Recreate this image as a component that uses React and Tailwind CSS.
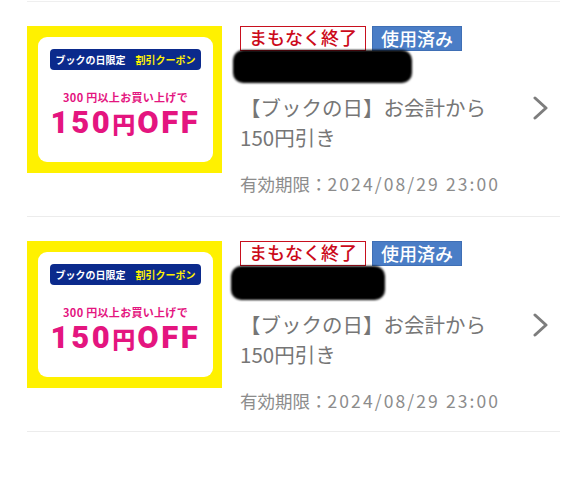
import React from "react";

const coupons = [
  { id: 1, blob: "ml-[-7px] w-[179px] h-[33px] mt-[-1px]" },
  { id: 2, blob: "ml-[-9px] w-[154px] h-[34px] mt-0" },
];

const CouponImage = () => (
  <div className="w-[195px] h-[147px] shrink-0 bg-[#fff100] pl-[11px] pt-[11px] pr-[9px] pb-[11px]">
    <div className="h-full bg-white rounded-[9px] flex flex-col items-center">
      <div className="mt-[12px] w-[151px] h-[21px] rounded-[4px] bg-[#0b2a8c] flex items-center justify-center gap-[10px] text-[10px] leading-none font-bold">
        <span className="text-white">ブックの日限定</span>
        <span className="text-[#fff200]">割引クーポン</span>
      </div>
      <p className="mt-[20px] text-[11px] leading-[14px] font-bold text-[#e4157f] tracking-[0.3px]">
        300 円以上お買い上げで
      </p>
      <p className="mt-[4px] font-['Roboto','Liberation_Sans',sans-serif] text-[31px] leading-[30px] font-black text-[#e4157f] tracking-[2.6px]">
        150
        <span className="font-['Noto_Sans_CJK_JP',sans-serif] text-[23px] tracking-normal mr-[2px]">円</span>
        OFF
      </p>
    </div>
  </div>
);

const Chevron = () => (
  <svg width="16" height="24" viewBox="0 0 16 24" className="shrink-0 mt-[4px] mr-[11px]">
    <polyline
      points="2,2 13,12 2,22"
      fill="none"
      stroke="#7d7d7d"
      strokeWidth="3"
      strokeLinecap="round"
      strokeLinejoin="round"
    />
  </svg>
);

export default function App() {
  return (
    <div
      className="min-h-screen bg-white pt-[1px] pl-[27px] pr-[26px]"
      style={{ fontFamily: '"Noto Sans CJK JP", "Noto Sans", sans-serif' }}>
      <div className="border-t border-[#efefef]">
        {coupons.map((c) => (
          <div key={c.id} className="h-[215px] flex pt-[24px] border-b border-[#ececec]">
            <CouponImage />
            <div className="flex-1 ml-[18px] flex flex-col">
              <div className="flex gap-[6px]">
                <span className="h-[25px] px-[8px] border-[1.5px] border-[#c8101e] text-[#cc0a1a] text-[18px] leading-[21px] font-medium">
                  まもなく終了
                </span>
                <span className="h-[25px] px-[8px] bg-[#4a7dc6] border border-[#3f6fb5] text-white text-[18px] leading-[22px] font-medium">
                  使用済み
                </span>
              </div>
              <div className={`${c.blob} bg-black rounded-[10px] blur-[1px]`}></div>
              <div className="flex items-start mt-[9px]">
                <p className="flex-1 text-[20.5px] leading-[30px] text-[#767676]">
                  【ブックの日】お会計から
                  <br />
                  150円引き
                </p>
                <Chevron />
              </div>
              <p className="mt-[20px] text-[17.5px] leading-[24px] text-[#8c8c8c]">
                有効期限：<span className="tracking-[2.1px]">2024/08/29 23:00</span>
              </p>
            </div>
          </div>
        ))}
      </div>
    </div>
  );
}
